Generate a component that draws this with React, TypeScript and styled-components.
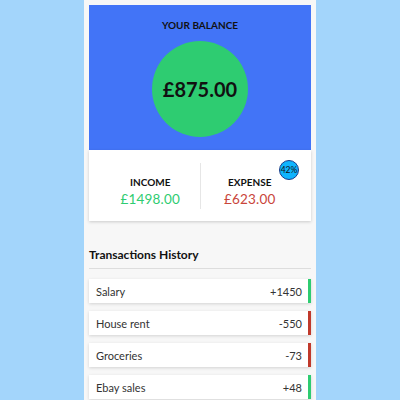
import React, { FC } from 'react';
import styled, { createGlobalStyle } from 'styled-components';

const GlobalStyle = createGlobalStyle`
  html, body {
    margin: 0;
    padding: 0;
    background: #a3d5fb;
    font-family: Lato, "Open Sans", sans-serif;
  }
`;

interface Transaction {
  text: string;
  amount: number;
}

const transactions: Transaction[] = [
  { text: 'Salary', amount: 1450 },
  { text: 'House rent', amount: -550 },
  { text: 'Groceries', amount: -73 },
  { text: 'Ebay sales', amount: 48 },
];

const App: FC = () => {
  return (
    <>
      <GlobalStyle />
      <Page>
        <Container>
          <BalanceCard>
            <BalanceTitle>YOUR BALANCE</BalanceTitle>
            <BalanceCircle>£875.00</BalanceCircle>
          </BalanceCard>
          <IncExpCard>
            <Column>
              <ColLabel>INCOME</ColLabel>
              <Money $positive>£1498.00</Money>
            </Column>
            <Column $divider>
              <ColLabel>EXPENSE</ColLabel>
              <Money>£623.00</Money>
              <Badge>42%</Badge>
            </Column>
          </IncExpCard>
          <HistoryTitle>Transactions History</HistoryTitle>
          <List>
            {transactions.map((t) => (
              <Item key={t.text} $positive={t.amount > 0}>
                <span>{t.text}</span>
                <span>{t.amount > 0 ? `+${t.amount}` : t.amount}</span>
              </Item>
            ))}
          </List>
        </Container>
      </Page>
    </>
  );
};

const Page = styled.div`
  width: 400px;
  height: 400px;
  display: flex;
  justify-content: center;
  overflow: hidden;
`;

const Container = styled.div`
  width: 222px;
  padding: 5px 5px 0;
  background: #f7f7f7;
  display: flex;
  flex-direction: column;
`;

const BalanceCard = styled.div`
  height: 145px;
  background: #4274f7;
  display: flex;
  flex-direction: column;
  align-items: center;
  box-sizing: border-box;
  padding-top: 14px;
`;

const BalanceTitle = styled.h4`
  margin: 0;
  font-size: 10px;
  font-weight: 700;
  color: #111;
`;

const BalanceCircle = styled.div`
  margin-top: 10px;
  width: 96px;
  height: 96px;
  border-radius: 50%;
  background: #2ecc71;
  display: flex;
  align-items: center;
  justify-content: center;
  font-size: 20px;
  font-weight: 700;
  color: #111;
`;

const IncExpCard = styled.div`
  height: 71px;
  padding: 0 12px;
  background: #fff;
  box-shadow: 0 1px 3px rgba(0, 0, 0, 0.18);
  display: flex;
  align-items: center;
`;

const Column = styled.div<{ $divider?: boolean }>`
  position: relative;
  flex: 1;
  height: 46px;
  display: flex;
  flex-direction: column;
  align-items: center;
  justify-content: center;
  border-left: ${(p) => (p.$divider ? '1px solid #e6e6e6' : 'none')};
  padding-top: 11px;
  box-sizing: border-box;
`;

const ColLabel = styled.h4`
  margin: 0;
  font-size: 10px;
  font-weight: 700;
  color: #111;
`;

const Money = styled.p<{ $positive?: boolean }>`
  margin: 3px 0 0;
  font-size: 13.5px;
  letter-spacing: 0.2px;
  color: ${(p) => (p.$positive ? '#2ecc71' : '#c9453a')};
`;

const Badge = styled.div`
  position: absolute;
  top: -3px;
  right: 0px;
  width: 20px;
  height: 20px;
  box-sizing: border-box;
  border-radius: 50%;
  background: #0fb4ff;
  border: 1px solid #1a3c8a;
  display: flex;
  align-items: center;
  justify-content: center;
  font-size: 8.5px;
  color: #111;
`;

const HistoryTitle = styled.h3`
  margin: 26px 0 0;
  padding-bottom: 6px;
  border-bottom: 1px solid #ddd;
  font-size: 12px;
  font-weight: 700;
  color: #111;
`;

const List = styled.ul`
  list-style: none;
  margin: 10px 0 0;
  padding: 0;
  display: flex;
  flex-direction: column;
  gap: 8px;
`;

const Item = styled.li<{ $positive?: boolean }>`
  height: 24px;
  background: #fff;
  box-shadow: 0 1px 3px rgba(0, 0, 0, 0.15);
  border-right: 3px solid ${(p) => (p.$positive ? '#2ecc71' : '#c0392b')};
  display: flex;
  align-items: center;
  justify-content: space-between;
  padding: 0 6px 0 7px;
  font-size: 11px;
  color: #333;
`;

export default App;
